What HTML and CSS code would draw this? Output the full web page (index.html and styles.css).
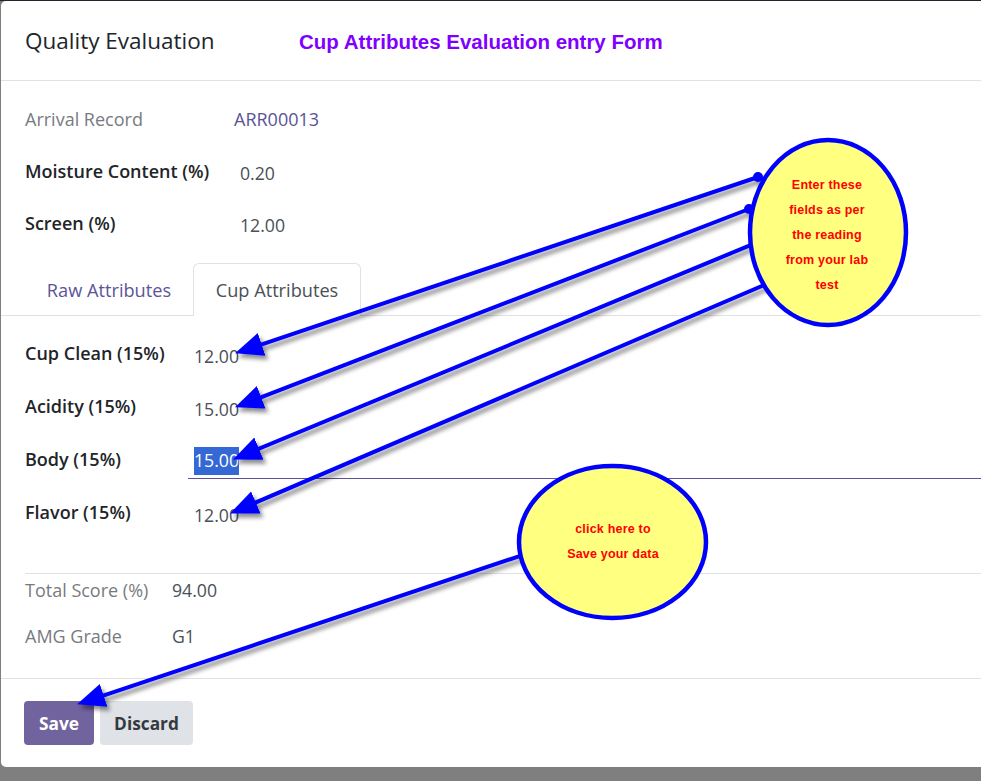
FILE: index.html
```html
<!DOCTYPE html>
<html lang="en">
<head>
<meta charset="utf-8">
<title>Quality Evaluation</title>
<link rel="stylesheet" href="styles.css">
</head>
<body>
<div class="modal">
  <header class="modal-header">
    <h4 class="modal-title">Quality Evaluation</h4>
    <span class="note-title">Cup Attributes Evaluation entry Form</span>
  </header>
  <main class="modal-body">
    <div class="fields fields-top">
      <span class="label muted">Arrival Record</span><span class="value link">ARR00013</span>
      <span class="label strong">Moisture Content (%)</span><span class="value input">0.20</span>
      <span class="label strong">Screen (%)</span><span class="value input">12.00</span>
    </div>
    <nav class="tabs">
      <span class="tab">Raw Attributes</span>
      <span class="tab active">Cup Attributes</span>
    </nav>
    <div class="fields fields-cup">
      <span class="label strong">Cup Clean (15%)</span><span class="value input">12.00</span>
      <span class="label strong">Acidity (15%)</span><span class="value input">15.00</span>
      <span class="label strong">Body (15%)</span><span class="value input focused"><span class="selected">15.00</span></span>
      <span class="label strong">Flavor (15%)</span><span class="value input">12.00</span>
    </div>
    <div class="fields fields-summary">
      <span class="label muted">Total Score (%)</span><span class="value">94.00</span>
      <span class="label muted">AMG Grade</span><span class="value">G1</span>
    </div>
  </main>
  <footer class="modal-footer">
    <button class="btn btn-primary">Save</button>
    <button class="btn btn-secondary">Discard</button>
  </footer>
</div>

<svg class="annotations" width="981" height="781" viewBox="0 0 981 781" xmlns="http://www.w3.org/2000/svg">
  <defs>
    <marker id="head" markerUnits="userSpaceOnUse" viewBox="0 -13 28 26" markerWidth="28" markerHeight="26" refX="17" refY="0" orient="auto">
      <path d="M0,-12 L28,0 L0,12 Z" fill="#0000ff"/>
    </marker>
    <filter id="shadow" filterUnits="userSpaceOnUse" x="0" y="0" width="981" height="781">
      <feDropShadow dx="3" dy="4" stdDeviation="2" flood-color="#000" flood-opacity="0.45"/>
    </filter>
  </defs>
  <g filter="url(#shadow)" stroke="#0000ff" stroke-width="4" fill="none">
    <line x1="758" y1="177" x2="245.5" y2="349.8" marker-end="url(#head)"/>
    <line x1="749" y1="209" x2="245.3" y2="403.4" marker-end="url(#head)"/>
    <line x1="759" y1="241.6" x2="243.2" y2="455.2" marker-end="url(#head)"/>
    <line x1="770" y1="282.5" x2="240.2" y2="509.1" marker-end="url(#head)"/>
    <line x1="530" y1="552.6" x2="87.5" y2="700.8" marker-end="url(#head)"/>
    <circle cx="758" cy="177" r="5" fill="#0000ff" stroke="none"/>
    <circle cx="749" cy="209" r="5" fill="#0000ff" stroke="none"/>
  </g>
  <ellipse cx="828" cy="232.5" rx="78" ry="92.5" fill="#ffff80" stroke="#0000ff" stroke-width="4.5"/>
  <g class="bubble-text" text-anchor="middle">
    <text x="827" y="188.5">Enter these</text>
    <text x="827" y="213.5">fields as per</text>
    <text x="827" y="238.5">the reading</text>
    <text x="827" y="263.5">from your lab</text>
    <text x="827" y="288.5">test</text>
  </g>
  <ellipse cx="612.5" cy="542" rx="93.5" ry="76" fill="#ffff80" stroke="#0000ff" stroke-width="4.5"/>
  <g class="bubble-text" text-anchor="middle">
    <text x="613" y="532.5">click here to</text>
    <text x="613" y="557.5">Save your data</text>
  </g>
</svg>
</body>
</html>
```

FILE: styles.css
```css
html {
  background: linear-gradient(#26222f 0 1px, #7f7f7f 1px);
  height: 100%;
}

body {
  margin: 0;
  height: 781px;
  overflow: hidden;
  position: relative;
  font-family: "Open Sans", "Noto Sans", sans-serif;
  font-size: 18px;
  color: #212529;
}

.modal {
  margin: 1px 0 0 1px;
  width: 1000px;
  background: #fff;
  border-radius: 5px;
}

.modal-header {
  height: 79px;
  border-bottom: 1px solid #dee2e6;
  display: flex;
  align-items: center;
  padding-left: 24px;
}

.modal-title {
  margin: 0;
  font-size: 22.5px;
  font-weight: 400;
  color: #212529;
  width: 274px;
}

.note-title {
  font-family: "Liberation Sans", Arial, sans-serif;
  font-weight: 700;
  font-size: 20.5px;
  color: #8000ff;
  margin-top: 3px;
}

.fields {
  display: grid;
  align-items: center;
  margin-left: 24px;
}

.fields-top {
  grid-template-columns: 209px 1fr;
  grid-auto-rows: 52px;
  padding-top: 12px;
}

.label.muted {
  color: #777b80;
}

.label.strong {
  font-weight: 600;
  color: #212529;
}

.value {
  color: #495057;
}

.value.link {
  color: #5a5394;
}

.fields-top .value.input {
  padding-left: 6px;
  padding-top: 3px;
  font-size: 17.7px;
}

.tabs {
  margin-top: 14px;
  height: 52px;
  border-bottom: 1px solid #dee2e6;
  display: flex;
  padding-left: 24px;
}

.tab {
  width: 168px;
  box-sizing: border-box;
  height: 53px;
  display: flex;
  align-items: center;
  justify-content: center;
  color: #5b5598;
  font-size: 18.2px;
  border: 1px solid transparent;
  border-bottom: 0;
  border-radius: 6px 6px 0 0;
}

.tab.active {
  color: #495057;
  background: #fff;
  border-color: #dee2e6;
}

.fields-cup {
  grid-template-columns: 163px 1fr;
  grid-auto-rows: 53px;
  padding-top: 10px;
}

.fields-cup .value.input {
  height: 34px;
  box-sizing: border-box;
  padding-left: 6px;
  padding-top: 8px;
  border-bottom: 1px solid transparent;
  font-size: 17.7px;
}

.fields-cup .value.focused {
  border-bottom-color: #5d4f9a;
  height: 37px;
  padding-top: 6px;
  margin-top: 3px;
}

.selected {
  background: #3468d4;
  color: #fff;
  padding: 1px 0 3px;
}

.fields-summary {
  margin-top: 35px;
  border-top: 1px solid #dee2e6;
  grid-template-columns: 147px 1fr;
  grid-auto-rows: 32px;
  row-gap: 14px;
  padding-bottom: 26px;
}

.fields-summary .value {
  font-size: 17.7px;
}

.modal-footer {
  border-top: 1px solid #dee2e6;
  padding: 22px 0 22px 23px;
  display: flex;
  gap: 6px;
}

.btn {
  height: 44px;
  border: 0;
  border-radius: 4px;
  font-family: "Open Sans", "Noto Sans", sans-serif;
  font-weight: 700;
  font-size: 17.3px;
  padding: 0;
}

.btn-primary {
  width: 70px;
  background: #71639e;
  color: #fff;
}

.btn-secondary {
  width: 93px;
  background: #dfe2e6;
  color: #343a40;
}

.annotations {
  position: absolute;
  left: 0;
  top: 0;
  pointer-events: none;
}

.bubble-text {
  font-family: "Liberation Sans", Arial, sans-serif;
  font-weight: 700;
  font-size: 12.5px;
  fill: #ff0000;
  letter-spacing: 0.2px;
}
```
